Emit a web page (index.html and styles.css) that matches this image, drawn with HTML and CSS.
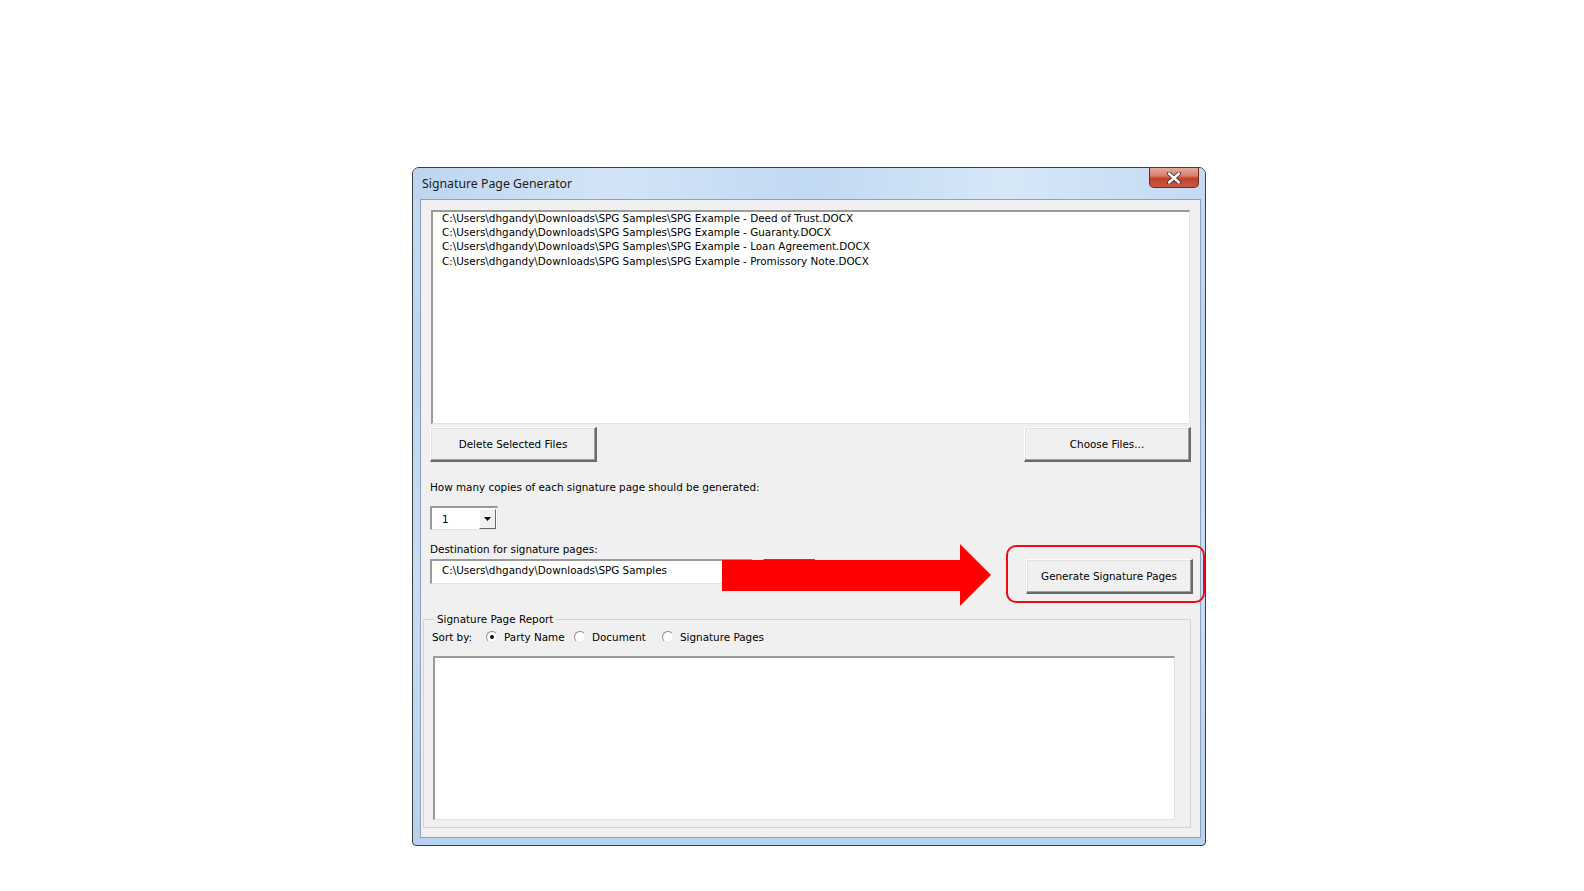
FILE: index.html
```html
<!DOCTYPE html>
<html lang="en">
<head>
    <meta charset="UTF-8">
    <title>Signature Page Generator</title>
    <link rel="stylesheet" href="styles.css">
</head>
<body>
    <div class="window">
        <div class="titlebar">
            <span class="title">Signature Page Generator</span>
            <div class="close-btn">
                <svg width="16" height="12" viewBox="0 0 16 12">
                    <path d="M3 1.5 L13 10.5 M13 1.5 L3 10.5" stroke="#4a2a26" stroke-width="4.2" stroke-linecap="round"/>
                    <path d="M3 1.5 L13 10.5 M13 1.5 L3 10.5" stroke="#ffffff" stroke-width="2.4" stroke-linecap="round"/>
                </svg>
            </div>
        </div>

        <div class="client">
            <div class="listbox">
                <div>C:\Users\dhgandy\Downloads\SPG Samples\SPG Example - Deed of Trust.DOCX</div>
                <div>C:\Users\dhgandy\Downloads\SPG Samples\SPG Example - Guaranty.DOCX</div>
                <div>C:\Users\dhgandy\Downloads\SPG Samples\SPG Example - Loan Agreement.DOCX</div>
                <div>C:\Users\dhgandy\Downloads\SPG Samples\SPG Example - Promissory Note.DOCX</div>
            </div>

            <div class="button-row">
                <button class="btn">Delete Selected Files</button>
                <button class="btn">Choose Files...</button>
            </div>

            <div class="label copies-label">How many copies of each signature page should be generated:</div>
            <div class="combo">
                <span class="combo-value">1</span>
                <span class="combo-drop">
                    <svg width="7" height="4" viewBox="0 0 7 4"><path d="M0 0 H7 L3.5 4 Z" fill="#000"/></svg>
                </span>
            </div>

            <div class="label dest-label">Destination for signature pages:</div>
            <div class="dest-row">
                <div class="textfield">C:\Users\dhgandy\Downloads\SPG Samples</div>
                <button class="btn browse-btn">...</button>
                <button class="btn generate-btn">Generate Signature Pages</button>
            </div>

            <fieldset class="report">
                <legend>Signature Page Report</legend>
                <div class="sort-row">
                    <span class="sort-label">Sort by:</span>
                    <span class="option"><span class="radio checked"></span>Party Name</span>
                    <span class="option"><span class="radio"></span>Document</span>
                    <span class="option"><span class="radio"></span>Signature Pages</span>
                </div>
                <div class="report-box"></div>
            </fieldset>
        </div>

        <!-- annotations drawn over the dialog -->
        <svg class="arrow" width="270" height="62" viewBox="0 0 270 62">
            <path d="M0 16 H238 V0 L269 31 L238 62 V47 H0 Z" fill="#ff0000"/>
        </svg>
        <div class="highlight"></div>
    </div>
</body>
</html>
```

FILE: styles.css
```css
* {
    margin: 0;
    padding: 0;
    box-sizing: border-box;
}

body {
    background: #ffffff;
    padding: 167px 0 0 412px;
    font-family: 'DejaVu Sans', Verdana, sans-serif;
    font-size: 10.4px;
    color: #000;
}

.window {
    position: relative;
    width: 794px;
    height: 679px;
    border: 1px solid #3b3f44;
    border-radius: 7px 7px 4px 4px;
    background: linear-gradient(to bottom, #c4dbf3 0%, #bcd5f0 30%, #c9def5 60%, #b7d1ee 100%);
    display: flex;
    flex-direction: column;
}

.titlebar {
    height: 31px;
    display: flex;
    align-items: center;
    padding-left: 9px;
    background: linear-gradient(to right, #bdd5f0 0%, #d3e4f7 25%, #c2d9f2 50%, #d6e7f8 75%, #c4daf3 100%);
    border-radius: 6px 6px 0 0;
}

.title {
    font-family: 'Noto Sans', 'Open Sans', sans-serif;
    font-size: 12.3px;
    color: #1b1b1b;
}

.close-btn {
    margin-left: auto;
    margin-right: 6px;
    align-self: flex-start;
    width: 50px;
    height: 20px;
    border: 1px solid #6b2a20;
    border-top: none;
    border-radius: 0 0 5px 5px;
    background: linear-gradient(to bottom, #e3a99c 0%, #d7826f 40%, #c0402a 55%, #c85a45 100%);
    display: flex;
    align-items: center;
    justify-content: center;
}

.client {
    flex: 1;
    margin: 0 4px 7px 7px;
    border: 1px solid #8fa3b8;
    background: #f0f0f0;
    padding: 10px 0 9px 0;
    display: flex;
    flex-direction: column;
}

.listbox {
    margin-left: 10px;
    width: 759px;
    height: 214px;
    background: #fff;
    border-style: solid;
    border-width: 2px 1px 1px 2px;
    border-color: #9a9a9a #e3e3e3 #e3e3e3 #9a9a9a;
    padding: 0 0 0 9px;
    line-height: 14.2px;
    white-space: nowrap;
}

.listbox div:first-child {
    margin-top: -1px;
}

.button-row {
    margin: 3px 0 0 9px;
    width: 761px;
    display: flex;
    justify-content: space-between;
}

.btn {
    font-family: inherit;
    font-size: 10.4px;
    color: #000;
    height: 35px;
    width: 167px;
    background: #f0f0f0;
    border-style: solid;
    border-width: 1px 2px 2px 1px;
    border-color: #ffffff #6a6a6a #6a6a6a #ffffff;
    box-shadow: inset -1px -1px 0 #a0a0a0, inset 1px 1px 0 #e3e3e3;
}

.label {
    margin-left: 9px;
    line-height: 14px;
    white-space: nowrap;
}

.copies-label {
    margin-top: 18px;
}

.combo {
    margin: 12px 0 0 9px;
    width: 68px;
    height: 24px;
    background: #fff;
    border-style: solid;
    border-width: 2px 1px 1px 2px;
    border-color: #9a9a9a #e3e3e3 #e3e3e3 #9a9a9a;
    display: flex;
    align-items: center;
}

.combo-value {
    padding-left: 10px;
    flex: 1;
}

.combo-drop {
    width: 17px;
    height: 20px;
    margin-right: 1px;
    background: #f0f0f0;
    border-style: solid;
    border-width: 1px;
    border-color: #ffffff #6a6a6a #6a6a6a #ffffff;
    display: flex;
    align-items: center;
    justify-content: center;
}

.dest-label {
    margin-top: 12px;
}

.dest-row {
    margin: 3px 0 0 9px;
    display: flex;
    align-items: flex-start;
}

.textfield {
    width: 322px;
    height: 25px;
    background: #fff;
    border-style: solid;
    border-width: 2px 1px 1px 2px;
    border-color: #9a9a9a #e3e3e3 #e3e3e3 #9a9a9a;
    padding-left: 10px;
    line-height: 19px;
    white-space: nowrap;
}

.browse-btn {
    width: 52px;
    height: 25px;
    margin-left: 11px;
    border-top-color: #5c5c5c;
}

.generate-btn {
    margin-left: auto;
    margin-right: 7px;
}

.report {
    margin: 18px 0 0 2px;
    width: 768px;
    border: 1px solid #d3d3d3;
    padding: 4px 0 7px 8px;
    flex: 1;
    display: flex;
    flex-direction: column;
}

.report legend {
    margin-left: 2px;
    padding: 0 3px;
    line-height: 14px;
}

.sort-row {
    display: flex;
    align-items: center;
    height: 14px;
    white-space: nowrap;
}

.sort-label {
    width: 54px;
}

.option {
    width: 88px;
    display: flex;
    align-items: center;
}

.option:last-child {
    width: 120px;
}

.radio {
    width: 12px;
    height: 12px;
    margin-right: 6px;
    border-radius: 50%;
    border: 1px solid #8c8c8c;
    border-right-color: #e6e6e6;
    border-bottom-color: #e6e6e6;
    background: #fff;
    position: relative;
    flex-shrink: 0;
}

.radio.checked::after {
    content: "";
    position: absolute;
    left: 3px;
    top: 3px;
    width: 4px;
    height: 4px;
    border-radius: 50%;
    background: #111;
}

.report-box {
    margin: 12px 0 0 1px;
    width: 742px;
    flex: 1;
    background: #fff;
    border-style: solid;
    border-width: 2px 1px 1px 2px;
    border-color: #9a9a9a #e3e3e3 #e3e3e3 #9a9a9a;
}

.arrow {
    position: absolute;
    left: 309px;
    top: 376px;
}

.highlight {
    position: absolute;
    left: 593px;
    top: 377px;
    width: 199px;
    height: 58px;
    border: 2.5px solid #ee0a14;
    border-radius: 10px;
}
```
